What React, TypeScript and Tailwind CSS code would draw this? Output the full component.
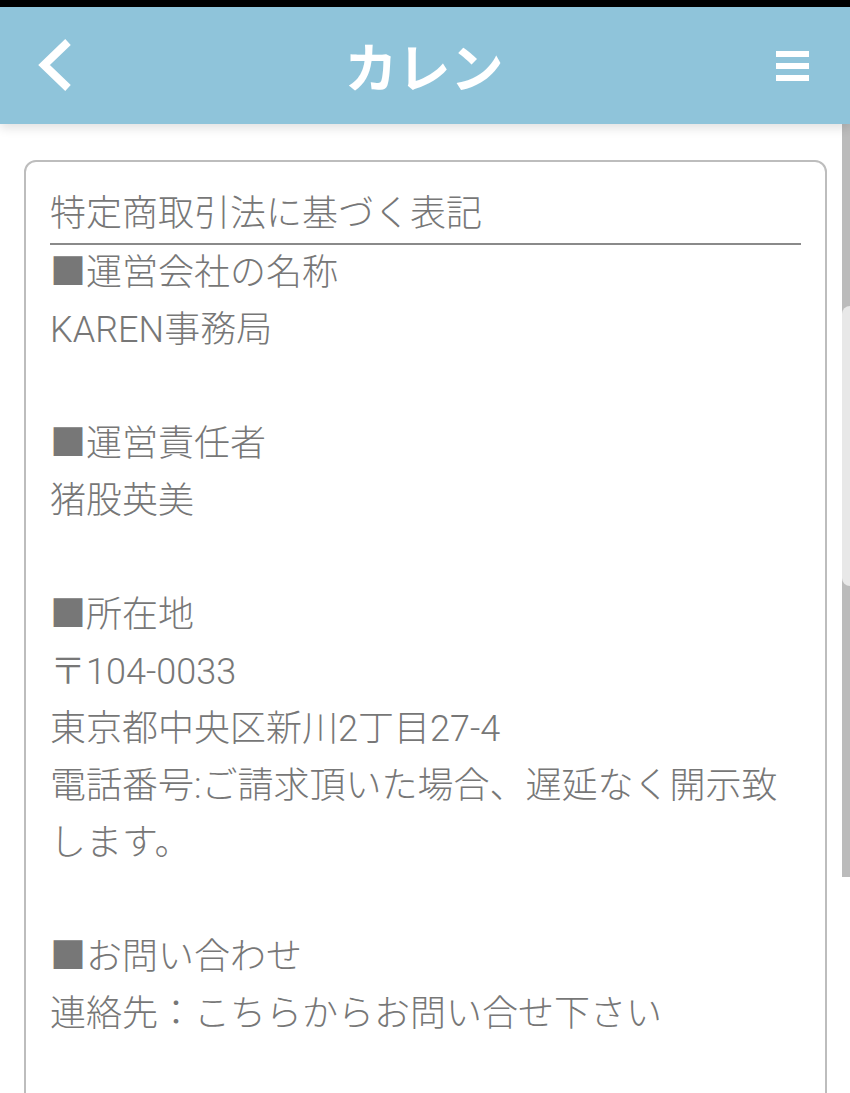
const lines: string[] = [
  "■運営会社の名称",
  "KAREN事務局",
  "",
  "■運営責任者",
  "猪股英美",
  "",
  "■所在地",
  "〒104-0033",
  "東京都中央区新川2丁目27-4",
  "電話番号:ご請求頂いた場合、遅延なく開示致します。",
  "",
  "■お問い合わせ",
  "連絡先：こちらからお問い合せ下さい",
  "",
  "",
];

export default function App() {
  return (
    <div
      className="relative h-[1093px] w-[850px] overflow-hidden bg-white"
      style={{ fontFamily: '"Roboto", "Noto Sans CJK JP", sans-serif' }}
    >
      <div className="h-[7px] bg-black" />
      <header className="relative z-10 flex h-[117px] items-center justify-between bg-[#8fc4da] px-[38px] shadow-[0_4px_10px_rgba(0,0,0,0.12)]">
        <svg width="40" height="56" viewBox="0 0 40 56" className="ml-[-2px]">
          <polyline
            points="32,4 8,27 32,50"
            fill="none"
            stroke="white"
            strokeWidth="8"
            strokeLinecap="butt"
            strokeLinejoin="miter"
          />
        </svg>
        <h1
          className="ml-[-4px] text-[53px] font-bold leading-none text-white"
          style={{ fontFamily: '"Noto Sans CJK JP", sans-serif' }}
        >
          カレン
        </h1>
        <div className="mr-[3px] flex w-[33px] flex-col gap-[6px]">
          <span className="h-[6px] bg-white" />
          <span className="h-[6px] bg-white" />
          <span className="h-[6px] bg-white" />
        </div>
      </header>

      <main className="px-[24px] pt-[36px] pr-[23px]">
        <div className="rounded-[12px] border-2 border-[#bdbdbd] px-[24px] pt-[24px] text-[36px] font-light leading-[57px] text-[#777777]">
          <h2 className="border-b-2 border-[#8a8a8a] font-light">特定商取引法に基づく表記</h2>
          {lines.map((line, i) => (
            <p key={i} className="min-h-[57px]">
              {line}
            </p>
          ))}
        </div>
      </main>

      {/* scrollbar overlay */}
      <div className="absolute right-0 top-[7px] h-[117px] w-[8px] bg-[#6f9aab]" />
      <div className="absolute right-0 top-[124px] flex h-[753px] w-[8px] flex-col bg-[#bbbbbb]">
        <div className="mt-[182px] h-[280px] rounded-l-[8px] bg-[#e8e8e8]" />
      </div>
    </div>
  );
}
